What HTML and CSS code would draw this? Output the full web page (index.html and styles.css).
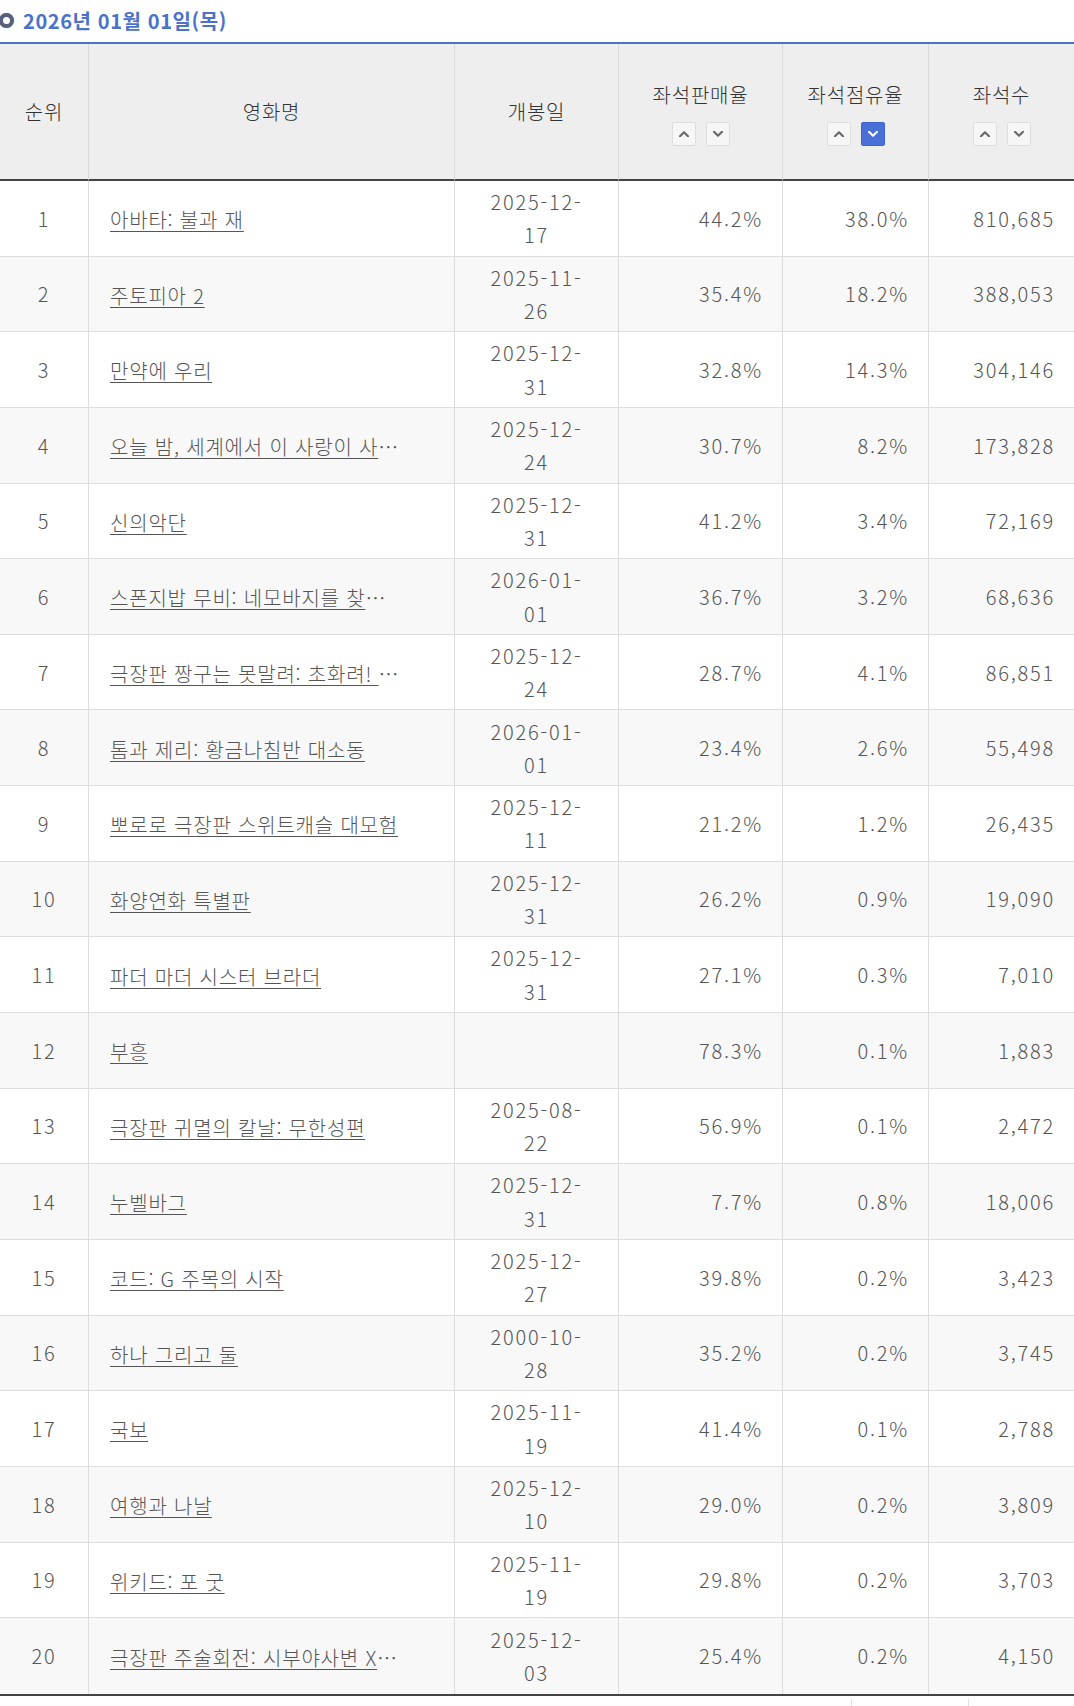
FILE: index.html
```html
<!DOCTYPE html>
<html lang="ko">
<head>
<meta charset="utf-8">
<title>좌석점유율</title>
<link rel="stylesheet" href="styles.css">
</head>
<body>
<div class="date-title"><span class="ring"></span><span class="date-text">2026년 01월 01일(목)</span></div>
<table class="rank-table">
  <colgroup>
    <col class="c-rank"><col class="c-title"><col class="c-date"><col class="c-num"><col class="c-num2"><col class="c-num2">
  </colgroup>
  <thead>
    <tr>
      <th>순위</th>
      <th>영화명</th>
      <th>개봉일</th>
      <th>
        <div class="th-label">좌석판매율</div>
        <div class="sort">
          <button class="sort-btn" type="button"><svg width="10" height="6" viewBox="0 0 10 6"><path d="M1 5.2 L5 1.3 L9 5.2" /></svg></button>
          <button class="sort-btn" type="button"><svg width="10" height="6" viewBox="0 0 10 6"><path d="M1 0.8 L5 4.7 L9 0.8" /></svg></button>
        </div>
      </th>
      <th>
        <div class="th-label">좌석점유율</div>
        <div class="sort">
          <button class="sort-btn" type="button"><svg width="10" height="6" viewBox="0 0 10 6"><path d="M1 5.2 L5 1.3 L9 5.2" /></svg></button>
          <button class="sort-btn active" type="button"><svg width="10" height="6" viewBox="0 0 10 6"><path d="M1 0.8 L5 4.7 L9 0.8" /></svg></button>
        </div>
      </th>
      <th>
        <div class="th-label">좌석수</div>
        <div class="sort">
          <button class="sort-btn" type="button"><svg width="10" height="6" viewBox="0 0 10 6"><path d="M1 5.2 L5 1.3 L9 5.2" /></svg></button>
          <button class="sort-btn" type="button"><svg width="10" height="6" viewBox="0 0 10 6"><path d="M1 0.8 L5 4.7 L9 0.8" /></svg></button>
        </div>
      </th>
    </tr>
  </thead>
  <tbody>
    <tr><td>1</td><td class="t"><a href="#">아바타: 불과 재</a></td><td class="d">2025-12-17</td><td class="n">44.2%</td><td class="n">38.0%</td><td class="n">810,685</td></tr>
    <tr><td>2</td><td class="t"><a href="#">주토피아 2</a></td><td class="d">2025-11-26</td><td class="n">35.4%</td><td class="n">18.2%</td><td class="n">388,053</td></tr>
    <tr><td>3</td><td class="t"><a href="#">만약에 우리</a></td><td class="d">2025-12-31</td><td class="n">32.8%</td><td class="n">14.3%</td><td class="n">304,146</td></tr>
    <tr><td>4</td><td class="t"><a href="#">오늘 밤, 세계에서 이 사랑이 사라진다 해도</a></td><td class="d">2025-12-24</td><td class="n">30.7%</td><td class="n">8.2%</td><td class="n">173,828</td></tr>
    <tr><td>5</td><td class="t"><a href="#">신의악단</a></td><td class="d">2025-12-31</td><td class="n">41.2%</td><td class="n">3.4%</td><td class="n">72,169</td></tr>
    <tr><td>6</td><td class="t"><a href="#">스폰지밥 무비: 네모바지를 찾아서</a></td><td class="d">2026-01-01</td><td class="n">36.7%</td><td class="n">3.2%</td><td class="n">68,636</td></tr>
    <tr><td>7</td><td class="t"><a href="#">극장판 짱구는 못말려: 초화려! 작열하는 떡잎마을 댄서즈</a></td><td class="d">2025-12-24</td><td class="n">28.7%</td><td class="n">4.1%</td><td class="n">86,851</td></tr>
    <tr><td>8</td><td class="t"><a href="#">톰과 제리: 황금나침반 대소동</a></td><td class="d">2026-01-01</td><td class="n">23.4%</td><td class="n">2.6%</td><td class="n">55,498</td></tr>
    <tr><td>9</td><td class="t"><a href="#">뽀로로 극장판 스위트캐슬 대모험</a></td><td class="d">2025-12-11</td><td class="n">21.2%</td><td class="n">1.2%</td><td class="n">26,435</td></tr>
    <tr><td>10</td><td class="t"><a href="#">화양연화 특별판</a></td><td class="d">2025-12-31</td><td class="n">26.2%</td><td class="n">0.9%</td><td class="n">19,090</td></tr>
    <tr><td>11</td><td class="t"><a href="#">파더 마더 시스터 브라더</a></td><td class="d">2025-12-31</td><td class="n">27.1%</td><td class="n">0.3%</td><td class="n">7,010</td></tr>
    <tr><td>12</td><td class="t"><a href="#">부흥</a></td><td class="d"></td><td class="n">78.3%</td><td class="n">0.1%</td><td class="n">1,883</td></tr>
    <tr><td>13</td><td class="t"><a href="#">극장판 귀멸의 칼날: 무한성편</a></td><td class="d">2025-08-22</td><td class="n">56.9%</td><td class="n">0.1%</td><td class="n">2,472</td></tr>
    <tr><td>14</td><td class="t"><a href="#">누벨바그</a></td><td class="d">2025-12-31</td><td class="n">7.7%</td><td class="n">0.8%</td><td class="n">18,006</td></tr>
    <tr><td>15</td><td class="t"><a href="#">코드: G 주목의 시작</a></td><td class="d">2025-12-27</td><td class="n">39.8%</td><td class="n">0.2%</td><td class="n">3,423</td></tr>
    <tr><td>16</td><td class="t"><a href="#">하나 그리고 둘</a></td><td class="d">2000-10-28</td><td class="n">35.2%</td><td class="n">0.2%</td><td class="n">3,745</td></tr>
    <tr><td>17</td><td class="t"><a href="#">국보</a></td><td class="d">2025-11-19</td><td class="n">41.4%</td><td class="n">0.1%</td><td class="n">2,788</td></tr>
    <tr><td>18</td><td class="t"><a href="#">여행과 나날</a></td><td class="d">2025-12-10</td><td class="n">29.0%</td><td class="n">0.2%</td><td class="n">3,809</td></tr>
    <tr><td>19</td><td class="t"><a href="#">위키드: 포 굿</a></td><td class="d">2025-11-19</td><td class="n">29.8%</td><td class="n">0.2%</td><td class="n">3,703</td></tr>
    <tr><td>20</td><td class="t"><a href="#">극장판 주술회전: 시부야사변 X 사멸회유</a></td><td class="d">2025-12-03</td><td class="n">25.4%</td><td class="n">0.2%</td><td class="n">4,150</td></tr>
  </tbody>
</table>
<div class="below">
  <div class="pager-box"></div>
</div>
</body>
</html>
```

FILE: styles.css
```css
* { box-sizing: border-box; }

html, body {
  margin: 0;
  padding: 0;
  background: #fff;
}

body {
  font-family: "Noto Sans CJK KR", "Noto Sans", sans-serif;
  color: #555;
  overflow: hidden;
  letter-spacing: 0.8px;
}

.date-title {
  height: 44px;
  border-bottom: 2px solid #4a72c9;
  display: flex;
  align-items: center;
}

.ring {
  width: 15px;
  height: 15px;
  border-radius: 50%;
  border: 4px solid #56607a;
  background: #fff;
  margin-left: -1px;
  margin-right: 9px;
  margin-top: -2px;
  flex: none;
  box-shadow: 0 0 1px rgba(60, 70, 100, 0.6);
}

.date-text {
  font-size: 20px;
  line-height: 42px;
  font-weight: 700;
  color: #4a72c9;
  letter-spacing: 0.6px;
}

.rank-table {
  width: 1074px;
  table-layout: fixed;
  border-collapse: separate;
  border-spacing: 0;
  border-bottom: 2px solid #444;
}

.c-rank { width: 88px; }
.c-title { width: 366px; }
.c-date { width: 164px; }
.c-num { width: 164px; }
.c-num2 { width: 146px; }

.rank-table th {
  height: 137px;
  background: #eeeeee;
  border-bottom: 2px solid #444;
  border-left: 1px solid #d9d9d9;
  font-size: 20px;
  line-height: 33px;
  font-weight: 300;
  color: #333;
  text-align: center;
  vertical-align: middle;
  padding: 0;
}

.rank-table th:first-child,
.rank-table td:first-child {
  border-left: none;
}

.th-label {
  line-height: 33px;
}

.sort {
  display: flex;
  justify-content: center;
  gap: 10px;
  margin-top: 11px;
}

.sort-btn {
  width: 24px;
  height: 24px;
  padding: 0;
  margin: 0;
  border: 1px solid #dedede;
  border-radius: 2px;
  background: #f6f6f6;
  display: flex;
  align-items: center;
  justify-content: center;
}

.sort-btn svg path {
  fill: none;
  stroke: #6a6a6a;
  stroke-width: 2.2;
  stroke-linecap: round;
  stroke-linejoin: round;
}

.sort-btn.active {
  background: #4a6fd9;
  border-color: #3e63cc;
}

.sort-btn.active svg path {
  stroke: #fff;
}

.rank-table td {
  height: 75.65px;
  border-bottom: 1px solid #dddddd;
  border-left: 1px solid #dddddd;
  font-size: 20px;
  line-height: 33.3px;
  font-weight: 300;
  color: #555;
  text-align: center;
  vertical-align: middle;
  padding: 0 20px;
  letter-spacing: 1.8px;
}

.rank-table tbody tr:nth-child(even) td {
  background: #f8f8f8;
}

.rank-table tbody tr:last-child td {
  border-bottom: none;
}

.rank-table td.t {
  text-align: left;
  padding-left: 21px;
  letter-spacing: 0.8px;
}

.rank-table td.t a {
  display: inline-block;
  max-width: 292px;
  overflow: hidden;
  white-space: nowrap;
  text-overflow: ellipsis;
  vertical-align: middle;
  color: #555;
  text-decoration: underline;
  text-decoration-thickness: 1px;
  text-underline-offset: 3px;
}

.rank-table td.d {
  padding: 0 28px;
}

.rank-table td.n {
  text-align: right;
  padding-right: 19px;
}

.below {
  height: 40px;
}

.pager-box {
  margin-left: 851px;
  margin-top: 3px;
  width: 118px;
  height: 40px;
  border-left: 1px solid #ddd;
  border-right: 1px solid #ddd;
}
```
